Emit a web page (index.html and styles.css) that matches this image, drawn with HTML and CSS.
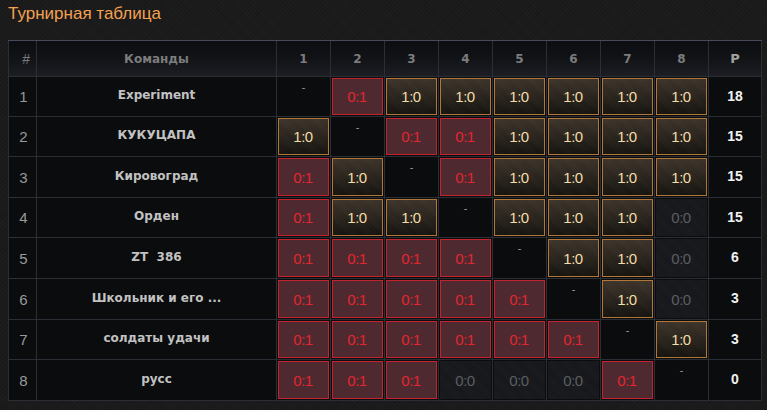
FILE: index.html
```html
<!DOCTYPE html>
<html lang="ru">
<head>
<meta charset="utf-8">
<title>Турнирная таблица</title>
<link rel="stylesheet" href="styles.css">
</head>
<body>
<h1 class="title">Турнирная таблица</h1>
<div class="board">
  <div class="hd num">#</div>
  <div class="hd">Команды</div>
  <div class="hd">1</div><div class="hd">2</div><div class="hd">3</div><div class="hd">4</div>
  <div class="hd">5</div><div class="hd">6</div><div class="hd">7</div><div class="hd">8</div>
  <div class="hd pts">P</div>

  <div class="c idx">1</div><div class="c team">Experiment</div>
  <div class="c"><span class="dash">-</span></div>
  <div class="c"><span class="sc loss">0:1</span></div>
  <div class="c"><span class="sc win">1:0</span></div>
  <div class="c"><span class="sc win">1:0</span></div>
  <div class="c"><span class="sc win">1:0</span></div>
  <div class="c"><span class="sc win">1:0</span></div>
  <div class="c"><span class="sc win">1:0</span></div>
  <div class="c"><span class="sc win">1:0</span></div>
  <div class="c p">18</div>

  <div class="c idx">2</div><div class="c team">КУКУЦАПА</div>
  <div class="c"><span class="sc win">1:0</span></div>
  <div class="c"><span class="dash">-</span></div>
  <div class="c"><span class="sc loss">0:1</span></div>
  <div class="c"><span class="sc loss">0:1</span></div>
  <div class="c"><span class="sc win">1:0</span></div>
  <div class="c"><span class="sc win">1:0</span></div>
  <div class="c"><span class="sc win">1:0</span></div>
  <div class="c"><span class="sc win">1:0</span></div>
  <div class="c p">15</div>

  <div class="c idx">3</div><div class="c team">Кировоград</div>
  <div class="c"><span class="sc loss">0:1</span></div>
  <div class="c"><span class="sc win">1:0</span></div>
  <div class="c"><span class="dash">-</span></div>
  <div class="c"><span class="sc loss">0:1</span></div>
  <div class="c"><span class="sc win">1:0</span></div>
  <div class="c"><span class="sc win">1:0</span></div>
  <div class="c"><span class="sc win">1:0</span></div>
  <div class="c"><span class="sc win">1:0</span></div>
  <div class="c p">15</div>

  <div class="c idx">4</div><div class="c team">Орден</div>
  <div class="c"><span class="sc loss">0:1</span></div>
  <div class="c"><span class="sc win">1:0</span></div>
  <div class="c"><span class="sc win">1:0</span></div>
  <div class="c"><span class="dash">-</span></div>
  <div class="c"><span class="sc win">1:0</span></div>
  <div class="c"><span class="sc win">1:0</span></div>
  <div class="c"><span class="sc win">1:0</span></div>
  <div class="c"><span class="sc draw">0:0</span></div>
  <div class="c p">15</div>

  <div class="c idx">5</div><div class="c team">ZT&nbsp;&nbsp;386</div>
  <div class="c"><span class="sc loss">0:1</span></div>
  <div class="c"><span class="sc loss">0:1</span></div>
  <div class="c"><span class="sc loss">0:1</span></div>
  <div class="c"><span class="sc loss">0:1</span></div>
  <div class="c"><span class="dash">-</span></div>
  <div class="c"><span class="sc win">1:0</span></div>
  <div class="c"><span class="sc win">1:0</span></div>
  <div class="c"><span class="sc draw">0:0</span></div>
  <div class="c p">6</div>

  <div class="c idx">6</div><div class="c team">Школьник и его ...</div>
  <div class="c"><span class="sc loss">0:1</span></div>
  <div class="c"><span class="sc loss">0:1</span></div>
  <div class="c"><span class="sc loss">0:1</span></div>
  <div class="c"><span class="sc loss">0:1</span></div>
  <div class="c"><span class="sc loss">0:1</span></div>
  <div class="c"><span class="dash">-</span></div>
  <div class="c"><span class="sc win">1:0</span></div>
  <div class="c"><span class="sc draw">0:0</span></div>
  <div class="c p">3</div>

  <div class="c idx">7</div><div class="c team">солдаты удачи</div>
  <div class="c"><span class="sc loss">0:1</span></div>
  <div class="c"><span class="sc loss">0:1</span></div>
  <div class="c"><span class="sc loss">0:1</span></div>
  <div class="c"><span class="sc loss">0:1</span></div>
  <div class="c"><span class="sc loss">0:1</span></div>
  <div class="c"><span class="sc loss">0:1</span></div>
  <div class="c"><span class="dash">-</span></div>
  <div class="c"><span class="sc win">1:0</span></div>
  <div class="c p">3</div>

  <div class="c idx">8</div><div class="c team">русс</div>
  <div class="c"><span class="sc loss">0:1</span></div>
  <div class="c"><span class="sc loss">0:1</span></div>
  <div class="c"><span class="sc loss">0:1</span></div>
  <div class="c"><span class="sc draw">0:0</span></div>
  <div class="c"><span class="sc draw">0:0</span></div>
  <div class="c"><span class="sc draw">0:0</span></div>
  <div class="c"><span class="sc loss">0:1</span></div>
  <div class="c"><span class="dash">-</span></div>
  <div class="c p">0</div>
</div>
</body>
</html>
```
FILE: styles.css
```css
* { box-sizing: border-box; }
html, body { height: 100%; }
body {
  margin: 0;
  padding: 0 6px 0 8px;
  background-color: #1b1b1b;
  background-image:
    repeating-linear-gradient(45deg, rgba(255,255,255,0.012) 0 1px, transparent 1px 3px),
    repeating-linear-gradient(-45deg, rgba(0,0,0,0.10) 0 1px, transparent 1px 3px);
  font-family: "Liberation Sans", Arial, sans-serif;
  overflow: hidden;
}
.title {
  margin: 0;
  padding-top: 4px;
  height: 40px;
  font-size: 17px;
  font-weight: normal;
  color: #f4a052;
  line-height: 20px;
}
.board {
  display: grid;
  width: 754px;
  grid-template-columns: 27px 239px repeat(8, 53px) 52px;
  grid-template-rows: 35px 39px 39px 40px 39px 40px 40px 39px 40px;
  gap: 1px;
  padding: 0 1px 1px 1px;
  background: #2c2e36;
  border-top: 1px solid #474a5c;
}
.hd {
  background: linear-gradient(to bottom, #0c0d10 0%, #121317 50%, #1c1e23 100%);
  color: #7c7c7c;
  font-family: "DejaVu Sans", Verdana, sans-serif;
  font-weight: bold;
  font-size: 12px;
  display: flex;
  align-items: center;
  justify-content: center;
}
.hd.num { font-weight: normal; font-family: "Liberation Sans", Arial, sans-serif; font-size: 14px; color: #7a7a7a; justify-content: flex-end; padding-right: 6px; }
.hd.pts { color: #a2a2a2; font-size: 13px; }
.c {
  background: #0b0c0e;
  display: flex;
  align-items: stretch;
  justify-content: center;
  padding: 1px;
}
.idx {
  align-items: center;
  color: #9a9a9a;
  font-size: 15px;
  padding-left: 3px;
}
.team {
  align-items: center;
  color: #c2c2c2;
  font-family: "DejaVu Sans", Verdana, sans-serif;
  font-weight: bold;
  font-size: 12px;
  padding-bottom: 4px;
}
.p {
  align-items: center;
  color: #f2f2f2;
  font-family: "Liberation Sans", Arial, sans-serif;
  font-weight: bold;
  font-size: 14px;
  padding-bottom: 3px;
}
.dash {
  color: #9a9a9a;
  font-size: 11px;
  line-height: 1;
  padding-top: 4px;
}
.sc {
  flex: 1;
  display: flex;
  align-items: center;
  justify-content: center;
  font-size: 15px;
  letter-spacing: -0.5px;
  padding-right: 1px;
}
.loss {
  background: #4e2a30;
  border: 1px solid #c4222c;
  color: #e2262f;
}
.win {
  border: 1px solid #b27636;
  color: #f2dca8;
  background:
    repeating-linear-gradient(45deg, rgba(255,255,255,0.03) 0 1px, transparent 1px 2px),
    linear-gradient(to bottom, #3b3228 0%, #2a241d 45%, #14120e 100%);
}
.draw {
  color: #5c5e62;
  background:
    repeating-linear-gradient(45deg, rgba(255,255,255,0.025) 0 1px, transparent 1px 2px),
    #15171b;
}
```
